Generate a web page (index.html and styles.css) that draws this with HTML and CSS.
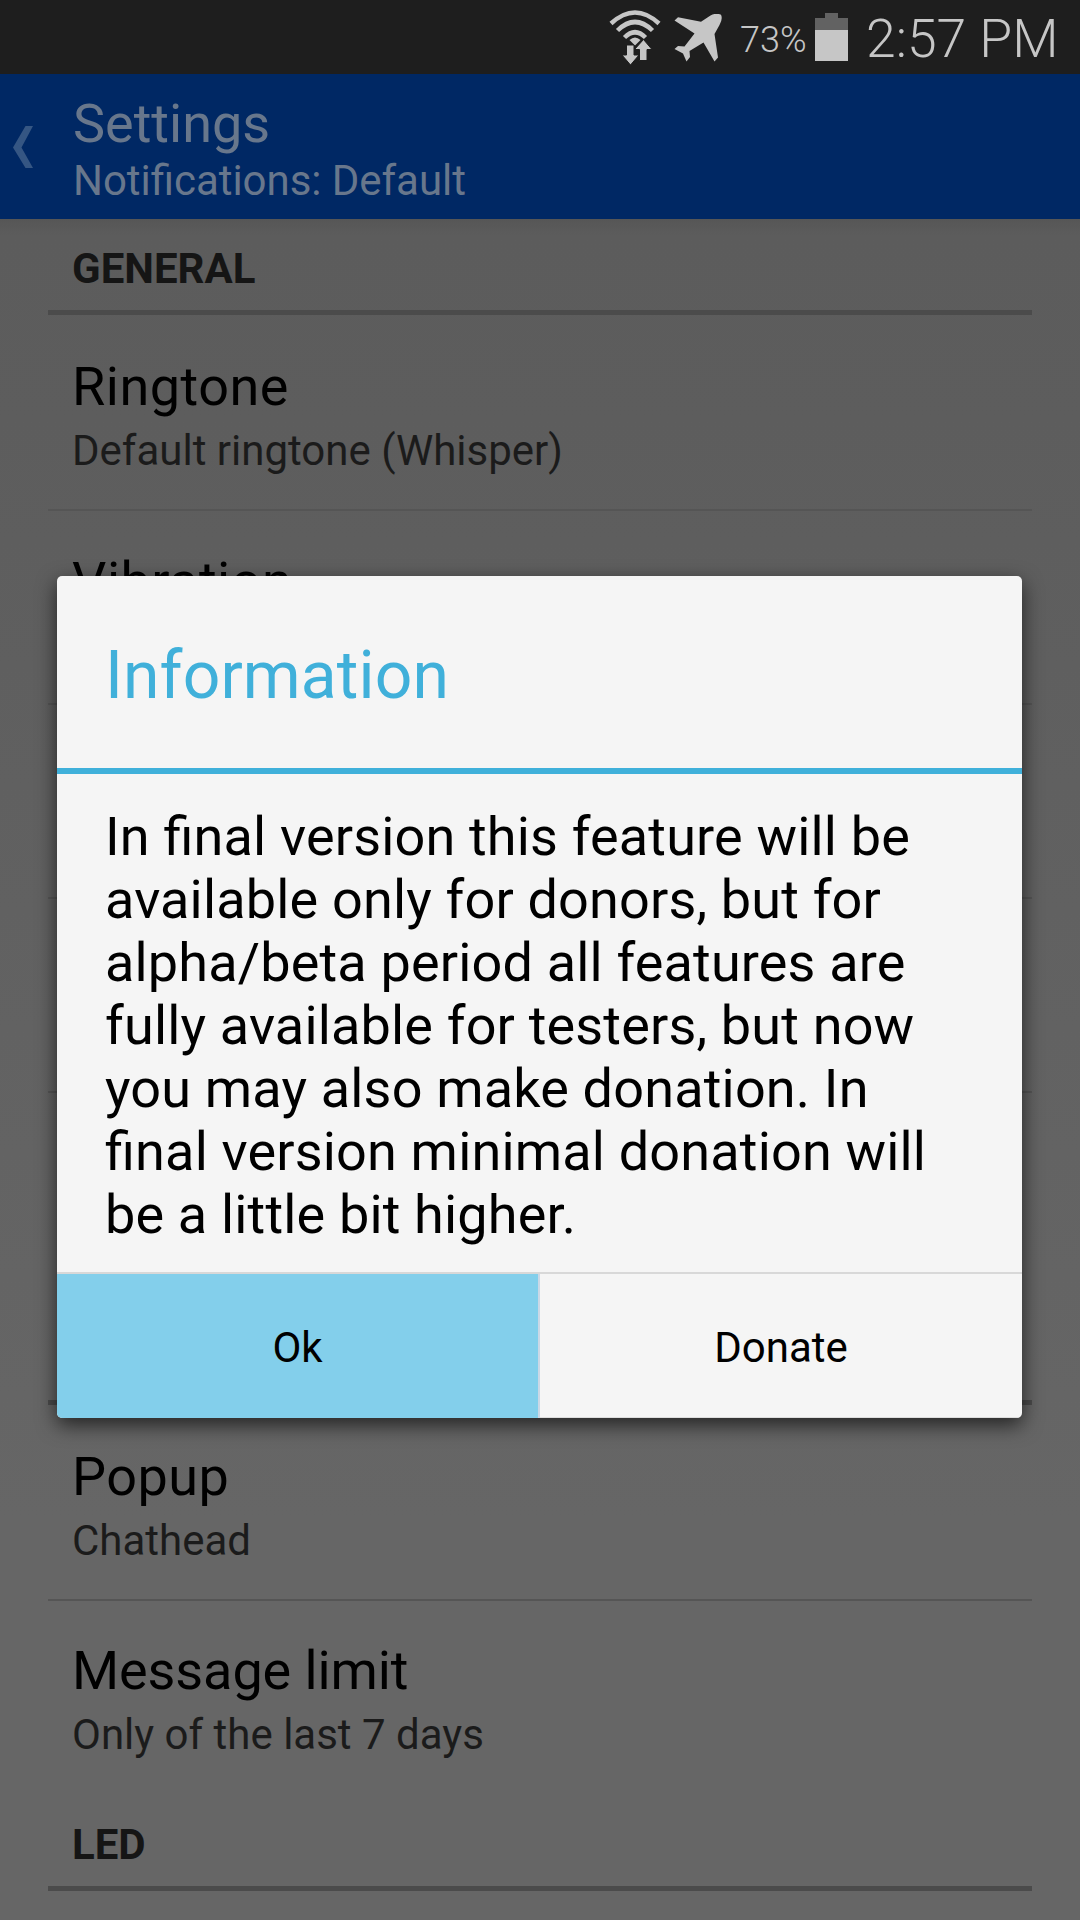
FILE: index.html
```html
<!DOCTYPE html>
<html>
 <head>
  <meta charset="UTF-8">
  <title>Settings</title>
  <link rel="stylesheet" href="styles.css">
 </head>
 <body>
  <div id="wrap">
   <div id="status">
    <svg class="wifi" width="52" height="56" viewBox="0 0 52 56">
     <g fill="none" stroke="#c6c6c6" stroke-width="4.5">
      <path d="M2 14.500Q26 -7.500 50 14.500"/>
      <path d="M8.500 21.500Q26 4.500 43.500 21.500"/>
      <path d="M15.500 28.500Q26 18 36.500 28.500"/>
     </g>
     <path fill="#c6c6c6" d="M20.500 31q5.500 -5 11 0l-5.500 5.500z"/>
     <path fill="#c6c6c6" stroke="#1e1e1e" stroke-width="1" d="M17.500 36h7.500v10h5l-8.500 10l-8.500 -10h4.500z"/>
     <path fill="#c6c6c6" stroke="#1e1e1e" stroke-width="1" d="M30.500 51.500v-11h-5l9 -10l8.500 10h-5v11z"/>
    </svg>
    <svg class="plane" width="48" height="48" viewBox="0 0 48 48">
     <path fill="#c6c6c6" d="M0.500 6.500L4 3.300L27 7.800L36.500 1.500Q42 -1.500 47 0.800Q49 5 45.500 11L40.500 20L44 43.500L40.500 47.500L29.500 28.500L15.500 37L16 43L12.500 47.500L9 39.500L0.500 35L4 32L10.500 32.500L20.500 19.500Z"/>
    </svg>
    <span class="percent">73%</span>
    <div class="battery"><i></i></div>
    <span class="time">2:57 PM</span>
   </div>

   <div id="bar">
    <svg class="back" width="20" height="42" viewBox="0 0 20 42"><path fill="#355683" d="M12.500 0H20L8.500 21.500L20 42H12.500L0 21.500Z"/></svg>
    <div>
     <h1>Settings</h1>
     <p>Notifications: Default</p>
    </div>
   </div>

   <div id="list">
    <h2>GENERAL</h2>
    <div class="row first"><h3>Ringtone</h3><p>Default ringtone (Whisper)</p></div>
    <div class="row"><h3>Vibration</h3></div>
    <div class="row"></div>
    <div class="row"></div>
    <div class="row tall"></div>
    <h2></h2>
    <div class="row first"><h3>Popup</h3><p>Chathead</p></div>
    <div class="row last"><h3>Message limit</h3><p>Only of the last 7 days</p></div>
    <h2>LED</h2>
   </div>

   <!-- dialog over the list -->
   <div id="dialog">
    <h4>Information</h4>
    <div class="message">In final version this feature will be<br>available only for donors, but for<br>alpha/beta period all features are<br>fully available for testers, but now<br>you may also make donation. In<br>final version minimal donation will<br>be a little bit higher.</div>
    <div class="btns">
     <div class="btn on">Ok</div>
     <div class="btn">Donate</div>
    </div>
   </div>
  </div>
 </body>
</html>
```

FILE: styles.css
```css
*{ margin:0; padding:0; box-sizing:border-box;}

body{ background:#606060;}

#wrap{
 width:1080px;
 height:1920px;
 position:relative;
 overflow:hidden;
 font-family:Roboto,"Liberation Sans",sans-serif;
 font-size:42px;
 line-height:49px;
}

#status{
 height:74px;
 padding:0 24px 0 0;
 display:flex;
 justify-content:flex-end;
 align-items:flex-start;
 background:#1e1e1e;
 color:#c6c6c6;
 font-weight:300;
 white-space:nowrap;
}
#status .wifi{ margin:9px 13px 0 0;}
#status .plane{ margin:14px 18px 0 0;}
#status .percent{
 width:75px;
 margin-top:19px;
 font-size:36px;
 line-height:42px;
}
#status .battery{
 width:33px;
 height:43px;
 margin:18px 18px 0 0;
 padding-top:12px;
 background:#626262;
}
#status .battery:before{
 content:'';
 display:block;
 width:13px;
 height:5px;
 margin:-17px auto 12px;
 background:#626262;
}
#status .battery i{
 display:block;
 height:31px;
 background:#c6c6c6;
}
#status .time{
 width:190px;
 margin-top:8px;
 font-size:53.5px;
 line-height:62px;
}

#bar{
 height:145px;
 padding:18px 0 0 13px;
 display:flex;
 background:#002864;
 color:#68778c;
}
#bar .back{ margin:34px 40px 0 0;}
#bar h1{
 font-size:54px;
 line-height:63px;
 font-weight:400;
}
#bar p{ margin-top:1px; letter-spacing:-.04px; font-feature-settings:"liga" 1;}

#list{
 height:1701px;
 padding:0 48px;
 background:linear-gradient(#565656 0,#5c5c5c 16px,#5d5d5d 200px,#666 1300px);
}
#list h2{
 height:96px;
 padding:25px 24px 0;
 border-bottom:5px solid #4b4b4b;
 color:#151515;
 font-size:42px;
 font-weight:700;
}
.row{
 height:194px;
 padding:39px 24px 0;
 border-bottom:2px solid #555;
 color:#1b1b1b;
}
.row h3{
 color:#000;
 font-size:54px;
 line-height:63px;
 font-weight:400;
 letter-spacing:.5px;
}
.row p{ margin-top:8px;}
.row.first{ height:196px; padding-top:40px;}
.row.tall{ height:216px; border:0;}
.row.last{ height:194px; padding-top:38px; border:0;}
.row.last h3{ letter-spacing:-.1px;}

#dialog{
 width:965px;
 height:842px;
 position:absolute;
 top:576px;
 left:57px;
 display:flex;
 flex-direction:column;
 border-radius:5px;
 overflow:hidden;
 background:#f5f5f5;
 color:#000;
 box-shadow:0 7px 20px rgba(0,0,0,.65);
}
#dialog h4{
 height:198px;
 padding:61px 48px 0;
 border-bottom:6px solid #40b0da;
 color:#40b0da;
 font-size:66px;
 line-height:77px;
 font-weight:400;
 letter-spacing:.1px;
}
.message{
 flex:1;
 padding:31px 48px 0;
 font-size:54px;
 line-height:63px;
 letter-spacing:.17px;
 font-feature-settings:"liga" 1; /* keep the fi ligature */
 white-space:nowrap;
}
.btns{
 height:146px;
 display:flex;
 border-top:2px solid #d8d8d8;
}
.btn{
 flex:1;
 padding-top:49px;
 text-align:center;
 border-bottom:1px solid #ddd;
}
.btn.on{
 flex:none;
 width:483px;
 background:#83cfeb;
 border-right:2px solid #cbd8e6;
 border-bottom:0;
}
```
